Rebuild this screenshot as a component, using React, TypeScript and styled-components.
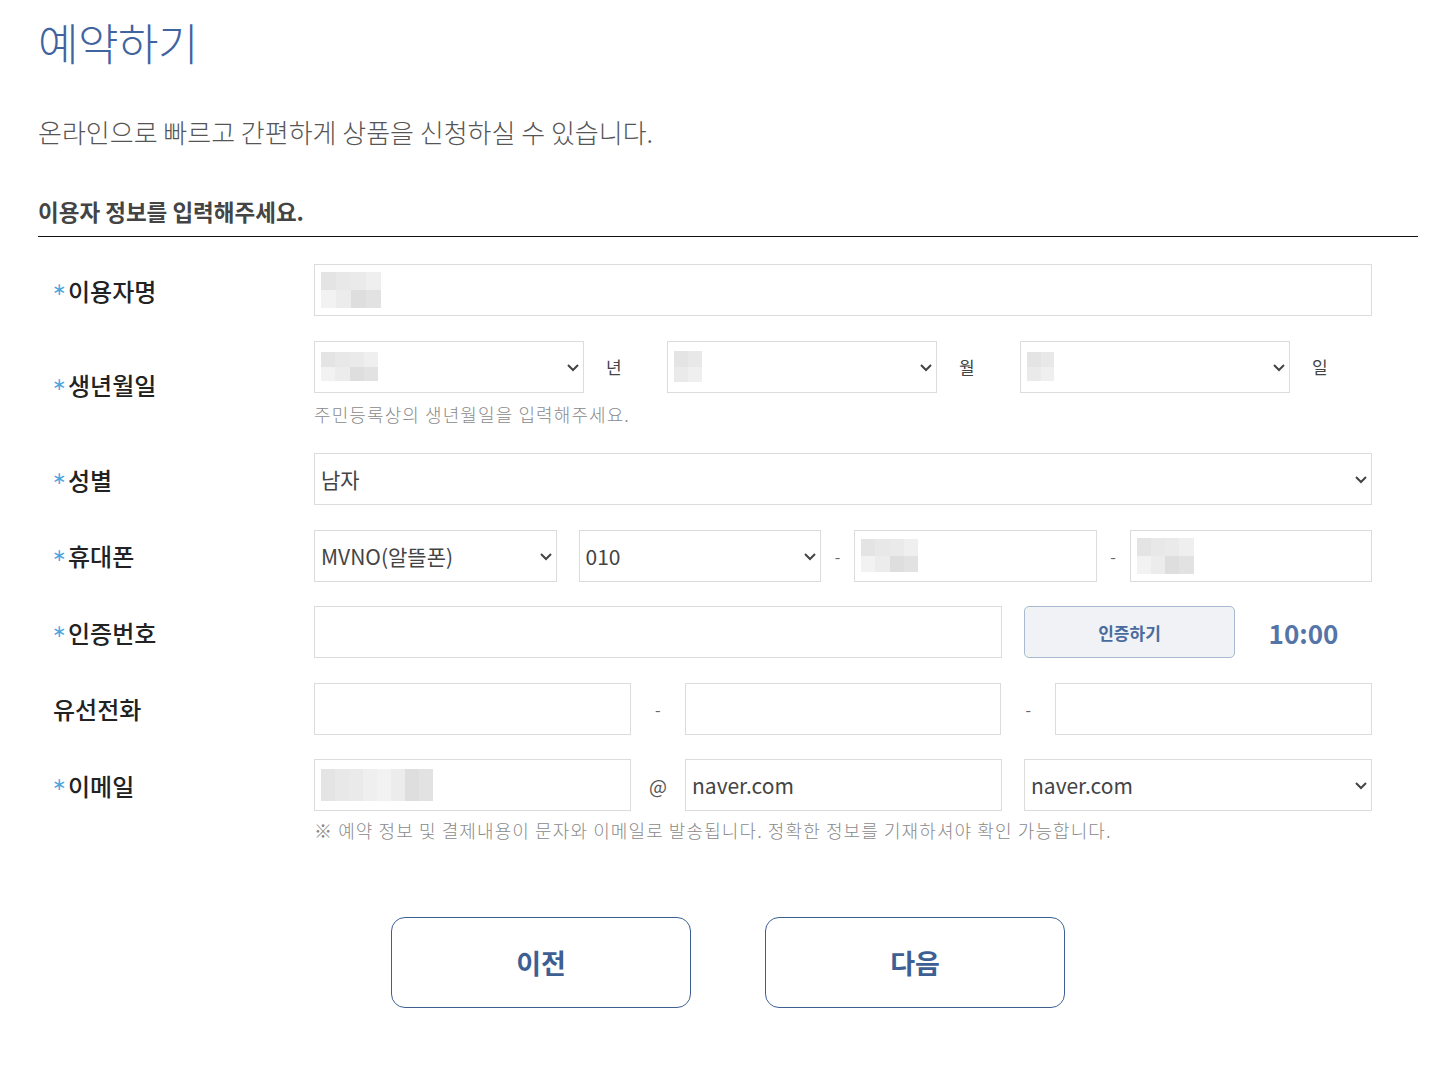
import React from 'react';
import styled, { createGlobalStyle } from 'styled-components';

const GlobalStyle = createGlobalStyle`
  body {
    margin: 0;
    background: #fff;
    font-family: "Noto Sans CJK KR", "Noto Sans", sans-serif;
    color: #333;
  }
`;

const Page = styled.div`
  width: 1380px;
  padding: 12px 0 60px 38px;
`;

const Title = styled.h1`
  margin: 0;
  font-size: 44px;
  font-weight: 300;
  line-height: 60px;
  color: #3f64a0;
  letter-spacing: -0.5px;
`;

const Lead = styled.p`
  margin: 43px 0 0;
  font-size: 26px;
  line-height: 34px;
  font-weight: 300;
  color: #555;
`;

const SectionTitle = styled.h2`
  margin: 47px 0 0;
  padding-bottom: 10px;
  font-size: 22.5px;
  line-height: 30px;
  font-weight: 700;
  color: #444;
  border-bottom: 1px solid #111;
`;

const Form = styled.div`
  display: flex;
  flex-direction: column;
  gap: 24.5px;
  padding: 27px 46px 0 0;
`;

const Row = styled.div<{ $top?: boolean }>`
  display: grid;
  grid-template-columns: 276px 1fr;
  align-items: ${(p) => (p.$top ? 'start' : 'center')};
`;

const Label = styled.div`
  display: flex;
  align-items: center;
  height: 52px;
  padding-left: 15px;
  font-size: 24px;
  font-weight: 500;
  color: #222;
`;

const Star = styled.span`
  display: inline-block;
  width: 16px;
  margin-left: -1px;
  color: #4aa5e0;
  font-family: "DejaVu Sans", sans-serif;
  font-size: 17px;
  font-weight: 400;
  transform: translateY(-1px);
`;

const Fields = styled.div<{ $cols?: string }>`
  display: grid;
  grid-template-columns: ${(p) => p.$cols || '1fr'};
  align-items: center;
`;

const Box = styled.div`
  position: relative;
  height: 52px;
  box-sizing: border-box;
  border: 1px solid #dcdcdc;
  background: #fff;
  display: flex;
  align-items: center;
  padding-left: 6px;
  font-size: 21px;
  color: #444;
`;

const Chevron = styled.svg`
  position: absolute;
  right: 3px;
  top: 50%;
  margin-top: -4px;
`;

const Unit = styled.span`
  padding-left: 22px;
  font-size: 17px;
  color: #444;
`;

const Dash = styled.span`
  text-align: center;
  font-size: 16px;
  color: #666;
`;

const At = styled.span`
  text-align: center;
  font-size: 19px;
  color: #555;
`;

const Hint = styled.p<{ $gap?: number }>`
  margin: ${(p) => p.$gap ?? 9}px 0 3px;
  font-size: 18px;
  line-height: 24px;
  font-weight: 300;
  color: #8a8a8a;
  letter-spacing: 1.1px;
`;

const AuthButton = styled.button`
  height: 52px;
  border: 1px solid #a9b9d2;
  border-radius: 5px;
  background: #f1f2f5;
  font-family: inherit;
  font-size: 17px;
  font-weight: 700;
  color: #4a6b9e;
`;

const Timer = styled.span`
  text-align: center;
  font-size: 26px;
  font-weight: 700;
  color: #5574a8;
`;

const Actions = styled.div`
  display: flex;
  justify-content: center;
  gap: 74px;
  margin-top: 72px;
`;

const NavButton = styled.button`
  width: 300px;
  height: 91px;
  border: 1px solid #3e5f94;
  border-radius: 14px;
  background: #fff;
  font-family: inherit;
  font-size: 27px;
  font-weight: 700;
  color: #3e5f94;
`;

const BlurGrid = styled.div<{ $cols: number }>`
  display: grid;
  grid-template-columns: repeat(${(p) => p.$cols}, 1fr);
`;

const shades = ['#ececec', '#e4e4e4', '#efefef', '#dedede', '#e8e8e8', '#f2f2f2', '#e2e2e2', '#eaeaea'];

const Blur = ({ w, h, cols, rows = 2 }: { w: number; h: number; cols: number; rows?: number }) => {
  const cells = [];
  for (let i = 0; i < cols * rows; i++) {
    cells.push(<div key={i} style={{ background: shades[(i * 3 + 1) % shades.length] }} />);
  }
  return (
    <BlurGrid $cols={cols} style={{ width: w, height: h }}>
      {cells}
    </BlurGrid>
  );
};

const Arrow = () => (
  <Chevron width="14" height="9" viewBox="0 0 14 9">
    <path d="M2 2l5 5 5-5" fill="none" stroke="#444" strokeWidth="2" />
  </Chevron>
);

const Select = ({ children }: { children?: React.ReactNode }) => (
  <Box>
    {children}
    <Arrow />
  </Box>
);

export default function App() {
  return (
    <Page>
      <GlobalStyle />
      <Title>예약하기</Title>
      <Lead>온라인으로 빠르고 간편하게 상품을 신청하실 수 있습니다.</Lead>
      <SectionTitle>이용자 정보를 입력해주세요.</SectionTitle>
      <Form>
        <Row>
          <Label><Star>∗</Star>이용자명</Label>
          <Fields>
            <Box><Blur w={60} h={36} cols={4} /></Box>
          </Fields>
        </Row>
        <Row>
          <Label><Star>∗</Star>생년월일</Label>
          <div>
            <Fields $cols="270px 83px 270px 83px 270px 83px">
              <Select><Blur w={57} h={29} cols={4} /></Select>
              <Unit>년</Unit>
              <Select><Blur w={28} h={31} cols={2} /></Select>
              <Unit>월</Unit>
              <Select><Blur w={27} h={29} cols={2} /></Select>
              <Unit>일</Unit>
            </Fields>
            <Hint>주민등록상의 생년월일을 입력해주세요.</Hint>
          </div>
        </Row>
        <Row>
          <Label><Star>∗</Star>성별</Label>
          <Fields>
            <Select>남자</Select>
          </Fields>
        </Row>
        <Row>
          <Label><Star>∗</Star>휴대폰</Label>
          <Fields $cols="1fr 22px 1fr 33px 1fr 33px 1fr">
            <Select>MVNO(알뜰폰)</Select>
            <span />
            <Select>010</Select>
            <Dash>-</Dash>
            <Box><Blur w={57} h={33} cols={4} /></Box>
            <Dash>-</Dash>
            <Box><Blur w={57} h={36} cols={4} /></Box>
          </Fields>
        </Row>
        <Row>
          <Label><Star>∗</Star>인증번호</Label>
          <Fields $cols="688px 22px 211px 1fr">
            <Box />
            <span />
            <AuthButton>인증하기</AuthButton>
            <Timer>10:00</Timer>
          </Fields>
        </Row>
        <Row>
          <Label>유선전화</Label>
          <Fields $cols="1fr 54px 1fr 54px 1fr">
            <Box />
            <Dash>-</Dash>
            <Box />
            <Dash>-</Dash>
            <Box />
          </Fields>
        </Row>
        <Row $top>
          <Label><Star>∗</Star>이메일</Label>
          <div>
            <Fields $cols="317px 54px 317px 22px 1fr">
              <Box><Blur w={112} h={32} cols={8} /></Box>
              <At>@</At>
              <Box>naver.com</Box>
              <span />
              <Select>naver.com</Select>
            </Fields>
            <Hint $gap={7}>※ 예약 정보 및 결제내용이 문자와 이메일로 발송됩니다. 정확한 정보를 기재하셔야 확인 가능합니다.</Hint>
          </div>
        </Row>
      </Form>
      <Actions>
        <NavButton>이전</NavButton>
        <NavButton>다음</NavButton>
      </Actions>
    </Page>
  );
}
